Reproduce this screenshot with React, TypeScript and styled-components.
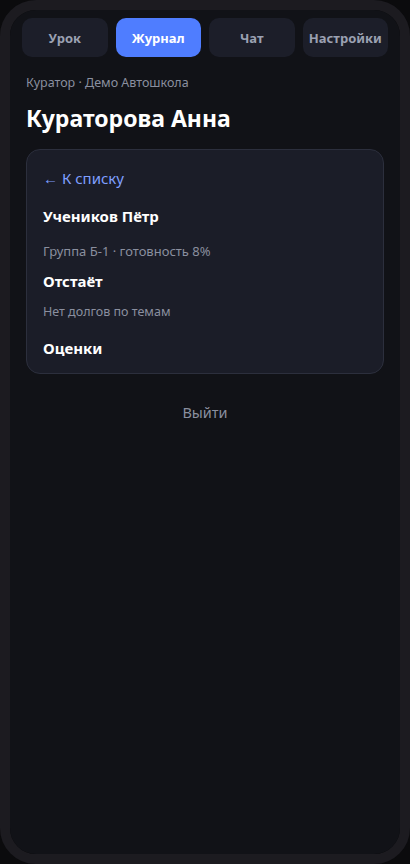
import React from "react";
import styled, { createGlobalStyle } from "styled-components";

const Global = createGlobalStyle`
  html, body { margin: 0; padding: 0; background: #0b0b0d; }
  body { font-family: "Noto Sans", "Open Sans", sans-serif; }
  * { box-sizing: border-box; }
`;

const Phone = styled.div`
  width: 410px;
  height: 864px;
  border: 10px solid #1c1b20;
  border-radius: 36px;
  background: #111217;
  overflow: hidden;
`;

const Screen = styled.div`
  height: 100%;
  background: #111217;
  display: flex;
  flex-direction: column;
`;

const Tabs = styled.nav`
  display: grid;
  grid-template-columns: repeat(4, 1fr);
  gap: 8px;
  padding: 8px 12px 0;
`;

const Tab = styled.div<{ $active?: boolean }>`
  height: 39px;
  border-radius: 10px;
  display: flex;
  align-items: center;
  justify-content: center;
  font-size: 13px;
  font-weight: 700;
  background: ${(p) => (p.$active ? "#4f7dff" : "#1c1e29")};
  color: ${(p) => (p.$active ? "#ffffff" : "#9ba1b2")};
`;

const Content = styled.main`
  padding: 0 16px;
  display: flex;
  flex-direction: column;
`;

const Crumb = styled.div`
  margin-top: 17px;
  font-size: 12.5px;
  line-height: 18px;
  color: #8a8f9f;
`;

const Title = styled.h1`
  margin: 11px 0 0;
  font-size: 23px;
  line-height: 30px;
  font-weight: 700;
  color: #ffffff;
`;

const Card = styled.section`
  margin-top: 16px;
  background: #1b1d28;
  border: 1px solid #2c2f3d;
  border-radius: 14px;
  padding: 17px 16px 14px;
  display: flex;
  flex-direction: column;
`;

const Back = styled.div`
  font-size: 15px;
  line-height: 22px;
  color: #7f9fff;
`;

const Heading = styled.div<{ $mt: number }>`
  margin-top: ${(p) => p.$mt}px;
  font-size: 15px;
  line-height: 22px;
  font-weight: 700;
  color: #ffffff;
`;

const Meta = styled.div<{ $mt: number; $size?: number }>`
  margin-top: ${(p) => p.$mt}px;
  font-size: ${(p) => p.$size ?? 13}px;
  line-height: 18px;
  color: #8a8f9f;
`;

const Logout = styled.div`
  margin-top: 27px;
  text-align: center;
  font-size: 14.5px;
  line-height: 22px;
  color: #8a8f9f;
`;

export default function App() {
  return (
    <>
      <Global />
      <Phone>
        <Screen>
          <Tabs>
            <Tab>Урок</Tab>
            <Tab $active>Журнал</Tab>
            <Tab>Чат</Tab>
            <Tab>Настройки</Tab>
          </Tabs>
          <Content>
            <Crumb>Куратор · Демо Автошкола</Crumb>
            <Title>Кураторова Анна</Title>
            <Card>
              <Back>← К списку</Back>
              <Heading $mt={16}>Учеников Пётр</Heading>
              <Meta $mt={15}>Группа Б-1 · готовность 8%</Meta>
              <Heading $mt={10}>Отстаёт</Heading>
              <Meta $mt={11} $size={12.5}>Нет долгов по темам</Meta>
              <Heading $mt={16}>Оценки</Heading>
            </Card>
            <Logout>Выйти</Logout>
          </Content>
        </Screen>
      </Phone>
    </>
  );
}
